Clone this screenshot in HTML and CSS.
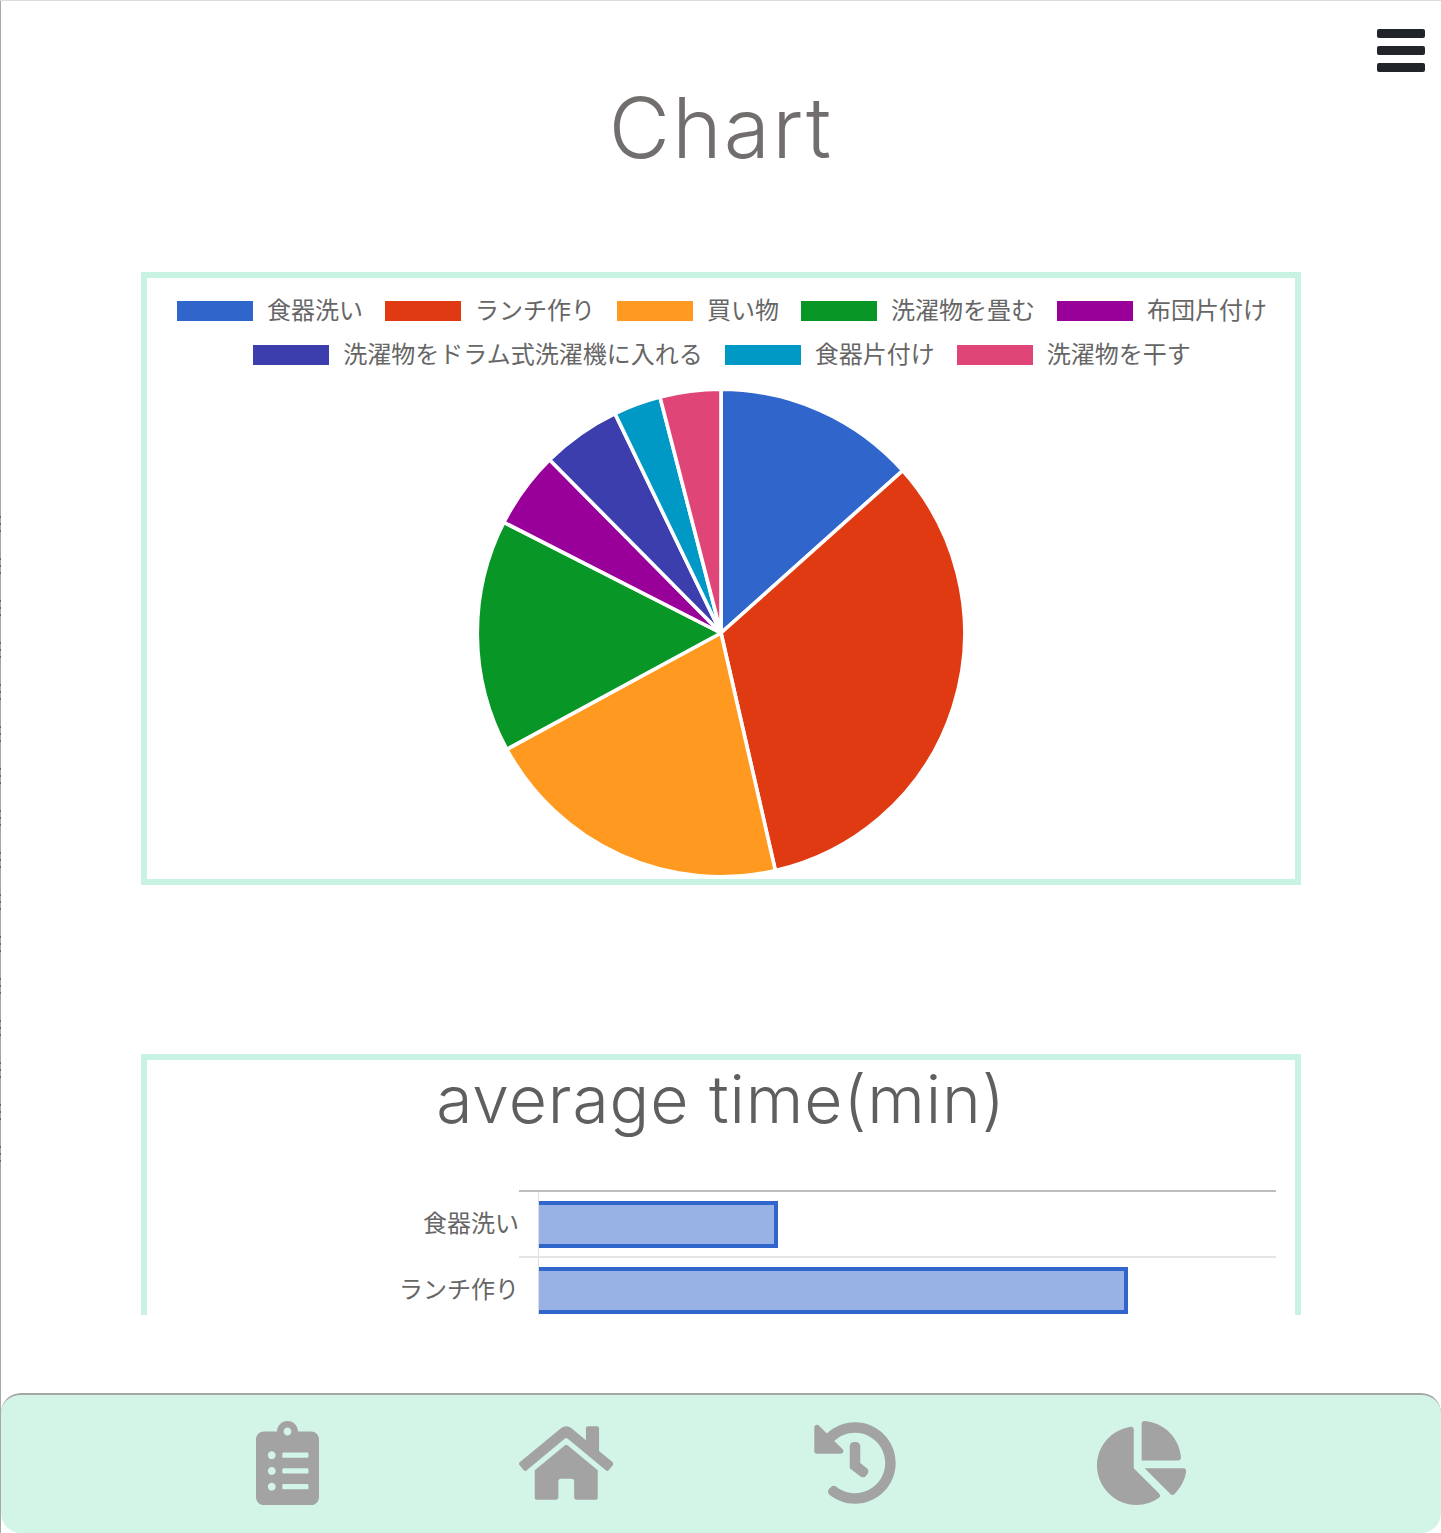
FILE: index.html
```html
<!DOCTYPE html>
<html lang="ja">
<head>
<meta charset="utf-8">
<title>Chart</title>
<link rel="stylesheet" href="styles.css">
</head>
<body>
<div class="app">
  <button class="menu" aria-label="menu"><span></span><span></span><span></span></button>
  <main class="content">
    <h1 class="page-title">Chart</h1>
    <section class="card card-pie">
      <ul class="legend">
        <li class="legend-item"><i class="swatch c1"></i>食器洗い</li>
        <li class="legend-item"><i class="swatch c2"></i>ランチ作り</li>
        <li class="legend-item"><i class="swatch c3"></i>買い物</li>
        <li class="legend-item"><i class="swatch c4"></i>洗濯物を畳む</li>
        <li class="legend-item"><i class="swatch c5"></i>布団片付け</li>
        <li class="legend-item"><i class="swatch c6"></i>洗濯物をドラム式洗濯機に入れる</li>
        <li class="legend-item"><i class="swatch c7"></i>食器片付け</li>
        <li class="legend-item"><i class="swatch c8"></i>洗濯物を干す</li>
      </ul>
      <svg class="pie" viewBox="0 0 490 490" width="490" height="490">
        <g stroke="#fff" stroke-width="3.6" stroke-linejoin="round">
          <path class="f1" d="M245 245V1.3A243.7 243.7 0 0 1 426.7 82.6Z"/>
          <path class="f2" d="M245 245L426.7 82.6A243.7 243.7 0 0 1 299.4 482.6Z"/>
          <path class="f3" d="M245 245L299.4 482.6A243.7 243.7 0 0 1 30.8 361.3Z"/>
          <path class="f4" d="M245 245L30.8 361.3A243.7 243.7 0 0 1 27.9 134.3Z"/>
          <path class="f5" d="M245 245L27.9 134.3A243.7 243.7 0 0 1 73.6 71.8Z"/>
          <path class="f6" d="M245 245L73.6 71.8A243.7 243.7 0 0 1 139 25.6Z"/>
          <path class="f7" d="M245 245L139 25.6A243.7 243.7 0 0 1 184 9.1Z"/>
          <path class="f8" d="M245 245L184 9.1A243.7 243.7 0 0 1 245 1.3Z"/>
        </g>
      </svg>
    </section>
    <section class="card card-bars">
      <h2 class="bars-title">average time(min)</h2>
      <div class="bars">
        <div class="bar-row">
          <span class="bar-label">食器洗い</span>
          <div class="plot first"><div class="bar" style="width:239px"></div></div>
        </div>
        <div class="bar-row">
          <span class="bar-label">ランチ作り</span>
          <div class="plot"><div class="bar" style="width:589px"></div></div>
        </div>
      </div>
    </section>
  </main>
  <nav class="tabbar">
    <a class="tab" href="#"><svg class="icon" viewBox="0 0 384 512" width="63" height="84"><path d="M336 64h-80c0-35.3-28.7-64-64-64s-64 28.7-64 64H48C21.5 64 0 85.5 0 112v352c0 26.5 21.5 48 48 48h288c26.5 0 48-21.5 48-48V112c0-26.5-21.5-48-48-48zM96 424c-13.3 0-24-10.7-24-24s10.7-24 24-24 24 10.7 24 24-10.7 24-24 24zm0-96c-13.3 0-24-10.7-24-24s10.7-24 24-24 24 10.7 24 24-10.7 24-24 24zm0-96c-13.3 0-24-10.7-24-24s10.7-24 24-24 24 10.7 24 24-10.7 24-24 24zm96-192c13.3 0 24 10.7 24 24s-10.7 24-24 24-24-10.7-24-24 10.7-24 24-24zm128 368c0 4.4-3.6 8-8 8H168c-4.4 0-8-3.6-8-8v-16c0-4.4 3.6-8 8-8h144c4.4 0 8 3.6 8 8v16zm0-96c0 4.4-3.6 8-8 8H168c-4.4 0-8-3.6-8-8v-16c0-4.4 3.6-8 8-8h144c4.4 0 8 3.6 8 8v16zm0-96c0 4.4-3.6 8-8 8H168c-4.4 0-8-3.6-8-8v-16c0-4.4 3.6-8 8-8h144c4.4 0 8 3.6 8 8v16z"/></svg></a>
    <a class="tab" href="#"><svg class="icon" viewBox="0 0 576 512" width="94.5" height="84"><path d="M280.37 148.26L96 300.11V464a16 16 0 0 0 16 16l112.06-.29a16 16 0 0 0 15.92-16V368a16 16 0 0 1 16-16h64a16 16 0 0 1 16 16v95.64a16 16 0 0 0 16 16.05L464 480a16 16 0 0 0 16-16V300L295.67 148.26a12.19 12.19 0 0 0-15.3 0zM571.6 251.47L488 182.56V44.05a12 12 0 0 0-12-12h-56a12 12 0 0 0-12 12v72.61L318.47 43a48 48 0 0 0-61 0L4.34 251.47a12 12 0 0 0-1.6 16.9l25.5 31A12 12 0 0 0 45.15 301l235.22-193.74a12.19 12.19 0 0 1 15.3 0L530.9 301a12 12 0 0 0 16.9-1.6l25.5-31a12 12 0 0 0-1.7-16.93z"/></svg></a>
    <a class="tab" href="#"><svg class="icon" viewBox="0 0 512 512" width="84" height="84"><path d="M504 255.531c.253 136.64-111.18 248.372-247.82 248.468-59.015.042-113.223-20.53-155.822-54.911-11.077-8.94-11.905-25.541-1.839-35.607l11.267-11.267c8.609-8.609 22.353-9.551 31.891-1.984C173.062 425.135 212.781 440 256 440c101.705 0 184-82.311 184-184 0-101.705-82.311-184-184-184-48.814 0-93.149 18.969-126.068 49.932l50.754 50.754c10.08 10.08 2.941 27.314-11.313 27.314H24c-8.837 0-16-7.163-16-16V38.627c0-14.254 17.234-21.393 27.314-11.314l49.372 49.372C129.209 34.136 189.552 8 256 8c136.81 0 247.747 110.78 248 247.531zm-180.912 78.784l9.823-12.63c8.138-10.463 6.253-25.542-4.21-33.679L288 256.349V152c0-13.255-10.745-24-24-24h-16c-13.255 0-24 10.745-24 24v135.651l65.409 50.874c10.463 8.137 25.541 6.253 33.679-4.21z"/></svg></a>
    <a class="tab" href="#"><svg class="icon" viewBox="0 0 544 512" width="89.25" height="84"><path d="M527.79 288H290.5l158.03 158.03c6.04 6.04 15.98 6.53 22.19.68 38.7-36.46 65.32-85.61 73.13-140.86 1.34-9.46-6.51-17.85-16.06-17.85zm-15.83-64.8C503.72 103.74 408.26 8.28 288.8.04 279.68-.59 272 7.1 272 16.24V240h223.77c9.14 0 16.82-7.68 16.19-16.8zM224 288V50.71c0-9.55-8.39-17.4-17.84-16.06C86.99 51.49-4.1 155.6.14 280.37 4.5 408.51 114.83 513.59 243.03 511.98c50.4-.63 96.97-16.87 135.26-44.03 7.9-5.6 8.42-17.23 1.57-24.08L224 288z"/></svg></a>
  </nav>
</div>
</body>
</html>
```

FILE: styles.css
```css
* { box-sizing: border-box; }
html, body { margin: 0; padding: 0; background: #fff; }
body { font-family: "Noto Sans CJK JP", "Noto Sans", sans-serif; }

.app {
  position: relative;
  display: flex;
  flex-direction: column;
  width: 1441px;
  height: 1533px;
  overflow: hidden;
  padding-left: 1px;
  border-top: 1px solid #dcdcdc;
}
.app::before {
  content: "";
  position: absolute;
  top: 0;
  bottom: 0;
  left: 0;
  z-index: 2;
  width: 1px;
  background:
    repeating-linear-gradient(to bottom, #666 0 2px, transparent 2px 7px, #666 7px 9px, transparent 9px 14px, #666 14px 16px, transparent 16px 42px) 0 515px / 1px 665px no-repeat,
    #a8a8a8;
}

.menu {
  position: absolute;
  top: 28px;
  right: 16px;
  display: flex;
  flex-direction: column;
  gap: 8px;
  width: 48px;
  padding: 0;
  border: 0;
  background: none;
}
.menu span { display: block; height: 9px; border-radius: 2px; background: #212529; }

.content {
  height: 1314px;
  overflow: hidden;
  padding: 0 140px;
}

.page-title {
  height: 271px;
  margin: 0;
  padding-top: 73px;
  font-family: Inter, "Noto Sans", sans-serif;
  font-size: 84px;
  font-weight: 300;
  letter-spacing: 2.2px;
  line-height: 108px;
  text-align: center;
  color: #726e6e;
}

.card { border: 6px solid #c8f2e2; }
.card-pie { height: 613px; margin-bottom: 169px; }
.card-bars { height: 600px; }

.legend {
  display: flex;
  flex-wrap: wrap;
  justify-content: center;
  gap: 24px 22px;
  margin: 0;
  padding: 23px 0 23px 2px;
  list-style: none;
}
.legend-item {
  display: flex;
  align-items: flex-start;
  gap: 14px;
  height: 20px;
  font-size: 24px;
  line-height: 16px;
  color: #666;
  white-space: nowrap;
}
.swatch { display: block; width: 76px; height: 20px; }
.c1 { background: #3066cc; } .f1 { fill: #3066cc; }
.c2 { background: #e03a13; } .f2 { fill: #e03a13; }
.c3 { background: #ff991f; } .f3 { fill: #ff991f; }
.c4 { background: #089627; } .f4 { fill: #089627; }
.c5 { background: #990099; } .f5 { fill: #990099; }
.c6 { background: #3b3eac; } .f6 { fill: #3b3eac; }
.c7 { background: #0099c6; } .f7 { fill: #0099c6; }
.c8 { background: #e04577; } .f8 { fill: #e04577; }

.pie { display: block; margin: 0 auto; }

.bars-title {
  height: 130px;
  margin: 0;
  font-family: Inter, "Noto Sans", sans-serif;
  font-size: 66px;
  font-weight: 300;
  letter-spacing: 0.9px;
  line-height: 78px;
  text-align: center;
  color: #5f5f5f;
}
.bars { padding-right: 19px; }
.bar-row { display: grid; grid-template-columns: 372px 1fr; height: 66px; }
.bar-label {
  align-self: center;
  margin-bottom: 2px;
  text-align: right;
  font-size: 24px;
  line-height: 32px;
  color: #666;
}
.plot {
  position: relative;
  padding: 9px 0 0 20px;
  border-top: 2px solid #e5e5e5;
}
.plot.first { border-top-color: #bdbdbd; }
.plot::before {
  content: "";
  position: absolute;
  left: 19px;
  top: 0;
  bottom: 0;
  width: 1px;
  background: #ddd;
}
.bar {
  position: relative;
  height: 47px;
  border: 4px solid #3066cc;
  border-left: 0;
  background: #99b2e6;
}

.tabbar {
  display: flex;
  justify-content: center;
  gap: 200px;
  height: 140px;
  margin-top: 78px;
  padding-top: 26px;
  border-top: 2px solid #a6a6a6;
  border-radius: 20px;
  background: #d3f5e8;
}
.tab { display: block; height: 84px; }
.icon { display: block; fill: #a3a3a3; }
```
